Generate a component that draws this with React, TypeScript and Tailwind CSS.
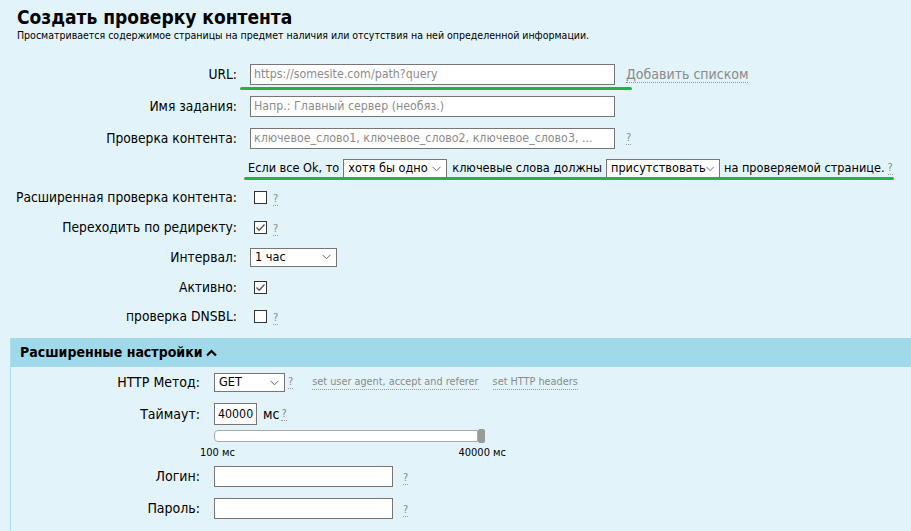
import React from 'react';

const font = { fontFamily: '"DejaVu Sans Condensed", "DejaVu Sans", sans-serif' };

function Hint({ className = '' }: { className?: string }) {
    return (
        <span className={`text-[11px] text-[#8a8a8a] border-b border-dotted border-[#9a9a9a] leading-[12px] ${className}`}>?</span>
    );
}

function Checkbox({ checked }: { checked?: boolean }) {
    return (
        <span className="inline-flex w-[13px] h-[13px] border border-[#333] bg-white items-center justify-center">
            {checked && (
                <svg width="11" height="11" viewBox="0 0 11 11">
                    <path d="M1.5 5.5 L4.2 8.2 L9.5 2.5" fill="none" stroke="#555" strokeWidth="1.3" />
                </svg>
            )}
        </span>
    );
}

function Select({ value, className = '' }: { value: string; className?: string }) {
    return (
        <span className={`inline-flex items-center justify-between bg-white border border-[#767676] h-[19px] pl-[4px] pr-[5px] text-[12.6px] text-black whitespace-nowrap ${className}`}>
            <span>{value}</span>
            <svg width="9" height="6" viewBox="0 0 9 6">
                <path d="M0.5 0.8 L4.5 4.8 L8.5 0.8" fill="none" stroke="#666" strokeWidth="1" />
            </svg>
        </span>
    );
}

function Row({ label, children, className = '', labelW = 'w-[237px]', gap = 'ml-[13px]', size = 'text-[13.7px]' }: { label: string; children?: React.ReactNode; className?: string; labelW?: string; gap?: string; size?: string }) {
    return (
        <div className={`flex items-center ${className}`}>
            <div className={`${labelW} ${size} shrink-0 text-right text-black whitespace-nowrap`}>{label}</div>
            <div className={`${gap} flex items-center`}>{children}</div>
        </div>
    );
}

function TextInput({ placeholder = '', value = '', className = '' }: { placeholder?: string; value?: string; className?: string }) {
    return (
        <div className={`h-[21px] bg-white border border-[#767676] flex items-center px-[3px] text-[12.3px] ${value ? 'text-black' : 'text-[#8c8c8c]'} whitespace-nowrap overflow-hidden ${className}`}>
            {value || placeholder}
        </div>
    );
}

export default function App() {
    return (
        <div style={font} className="w-full h-[531px] bg-[#e2f4f9] overflow-hidden">
            {/* Header */}
            <div className="pl-[17px] pt-[6px]">
                <h1 className="text-[19px] font-bold text-black leading-[22px]">Создать проверку контента</h1>
                <p className="text-[10.5px] text-black leading-[14px]">
                    Просматривается содержимое страницы на предмет наличия или отсутствия на ней определенной информации.
                </p>
            </div>

            {/* Main form */}
            <div className="mt-[22px]">
                <Row label="URL:" className="relative h-[21px]">
                    <TextInput placeholder="https://somesite.com/path?query" className="w-[365px]" />
                    <span className="ml-[11px] text-[14px] text-[#8a8a8a] border-b border-dotted border-[#9a9a9a] leading-[16px]">Добавить списком</span>
                    <div className="absolute left-[240px] top-[23px] w-[392px] h-[3px] rounded-full bg-[#22b14c]"></div>
                </Row>
                <Row label="Имя задания:" className="h-[21px] mt-[11px]">
                    <TextInput placeholder="Напр.: Главный сервер (необяз.)" className="w-[365px]" />
                </Row>
                <Row label="Проверка контента:" className="h-[21px] mt-[11px]">
                    <TextInput placeholder="ключевое_слово1, ключевое_слово2, ключевое_слово3, ..." className="w-[365px]" />
                    <Hint className="ml-[11px]" />
                </Row>

                <div className="relative flex items-center h-[19px] mt-[10px] pl-[248px] text-[12.6px] text-black whitespace-nowrap">
                    <span>Если все Ok, то</span>
                    <Select value="хотя бы одно" className="w-[104px] ml-[4px]" />
                    <span className="ml-[5px]">ключевые слова должны</span>
                    <Select value="присутствовать" className="w-[114px] ml-[4px]" />
                    <span className="ml-[4px]">на проверяемой странице.</span>
                    <Hint className="ml-[3px]" />
                    <div className="absolute left-[244px] top-[18px] w-[650px] h-[3px] rounded-full bg-[#22b14c]"></div>
                </div>

                <Row label="Расширенная проверка контента:" className="h-[13px] mt-[13px]" gap="ml-[17px]">
                    <Checkbox />
                    <Hint className="ml-[6px] mt-[4px]" />
                </Row>
                <Row label="Переходить по редиректу:" className="h-[13px] mt-[17px]" gap="ml-[17px]">
                    <Checkbox checked />
                    <Hint className="ml-[6px] mt-[4px]" />
                </Row>
                <Row label="Интервал:" className="h-[18px] mt-[14px]">
                    <Select value="1 час" className="w-[87px] h-[18px]" />
                </Row>
                <Row label="Активно:" className="h-[13px] mt-[15px]" gap="ml-[17px]">
                    <Checkbox checked />
                </Row>
                <Row label="проверка DNSBL:" className="h-[13px] mt-[16px]" gap="ml-[17px]">
                    <Checkbox />
                    <Hint className="ml-[6px] mt-[4px]" />
                </Row>
            </div>

            {/* Advanced settings */}
            <div className="ml-[10px] mt-[15px] border-l border-[#a8def0]">
                <div className="h-[29px] bg-[#a0d9ea] flex items-center pl-[9px] text-[14px] font-bold text-black">
                    Расширенные настройки
                    <svg className="ml-[3px]" width="11" height="8" viewBox="0 0 11 8">
                        <path d="M1 6.5 L5.5 2 L10 6.5" fill="none" stroke="#000" strokeWidth="2.2" />
                    </svg>
                </div>

                <div className="pt-[6px]">
                    <Row label="HTTP Метод:" labelW="w-[189px]" gap="ml-[14px]" size="text-[14px]" className="h-[19px]">
                        <Select value="GET" className="w-[71px]" />
                        <Hint className="ml-[3px]" />
                        <span className="ml-[19px] text-[10.8px] text-[#8a8a8a] border-b border-dotted border-[#9a9a9a] leading-[14px]">set user agent, accept and referer</span>
                        <span className="ml-[14px] text-[10.8px] text-[#8a8a8a] border-b border-dotted border-[#9a9a9a] leading-[14px]">set HTTP headers</span>
                    </Row>
                    <Row label="Таймаут:" labelW="w-[189px]" gap="ml-[14px]" size="text-[14px]" className="h-[22px] mt-[11px]">
                        <TextInput value="40000" className="w-[43px] h-[22px] px-[2px]" />
                        <span className="ml-[6px] text-[14px] text-black">мс</span>
                        <Hint className="ml-[2px]" />
                    </Row>
                    <div className="ml-[203px] mt-[4px] flex items-center">
                        <div className="w-[264px] h-[12px] bg-white border border-[#aaa] rounded-l-[4px]"></div>
                        <div className="w-[7px] h-[14px] bg-[#9a9a9a] rounded-[2px]"></div>
                    </div>
                    <div className="ml-[189px] w-[306px] flex justify-between text-[11px] text-black leading-[14px] mt-[3px]">
                        <span>100 мс</span>
                        <span>40000 мс</span>
                    </div>
                    <Row label="Логин:" labelW="w-[189px]" gap="ml-[14px]" size="text-[14px]" className="h-[21px] mt-[6px]">
                        <TextInput className="w-[179px]" />
                        <Hint className="ml-[10px] mt-[4px]" />
                    </Row>
                    <Row label="Пароль:" labelW="w-[189px]" gap="ml-[14px]" size="text-[14px]" className="h-[21px] mt-[11px]">
                        <TextInput className="w-[179px]" />
                        <Hint className="ml-[10px] mt-[4px]" />
                    </Row>
                    <div className="h-[20px]"></div>
                </div>
            </div>
        </div>
    );
}
